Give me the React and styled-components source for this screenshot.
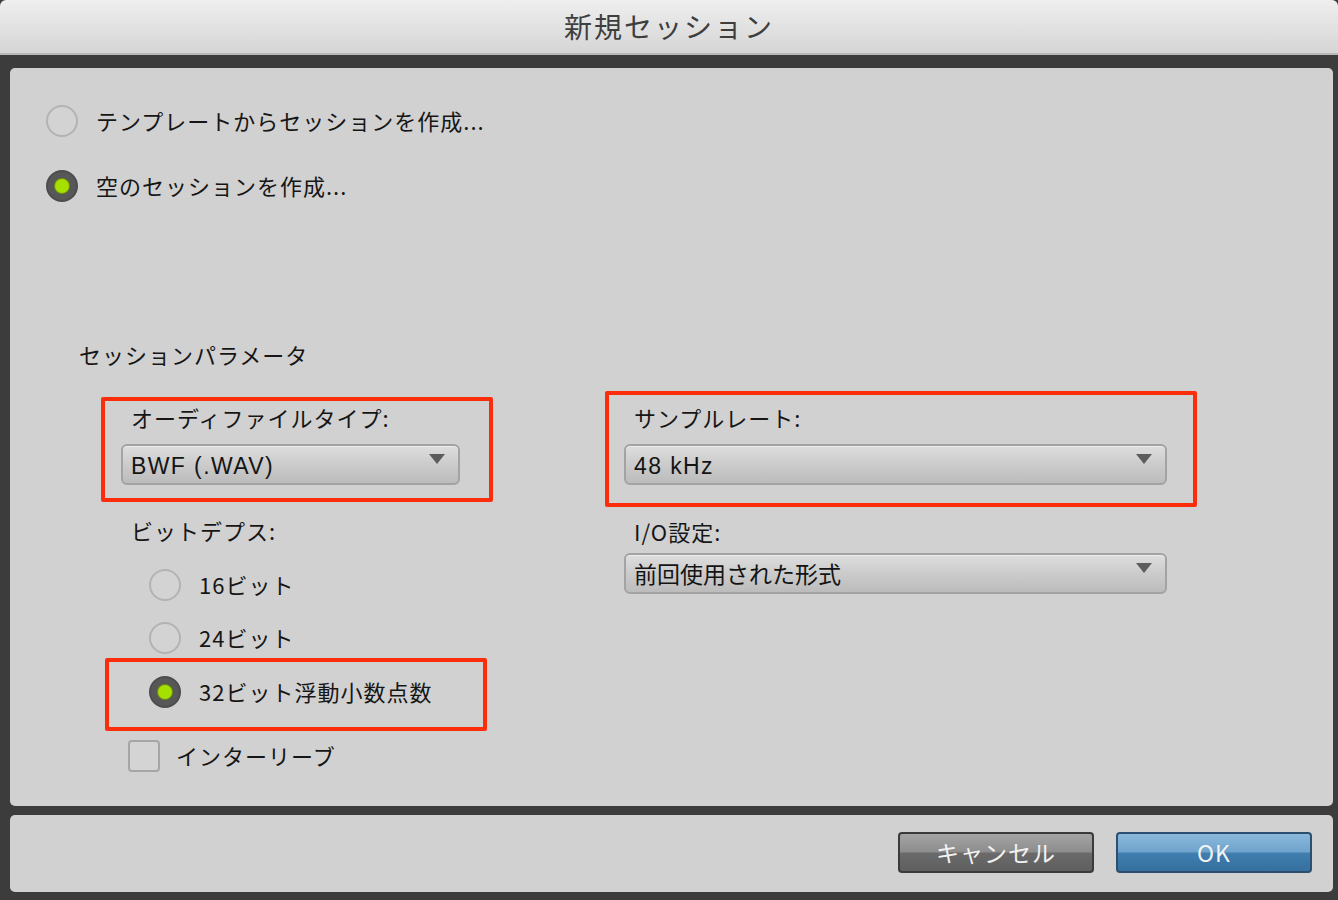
import React from "react";
import styled, { createGlobalStyle } from "styled-components";

const GlobalStyle = createGlobalStyle`
  html, body {
    margin: 0;
    padding: 0;
    background: #3c3c3c;
  }
  body {
    font-family: "Noto Sans CJK JP", "Noto Sans", sans-serif;
    color: #161616;
  }
`;

const Window = styled.div`
  width: 1338px;
  height: 900px;
  display: flex;
  flex-direction: column;
  background: #3c3c3c;
  overflow: hidden;
`;

const TitleBar = styled.div`
  height: 55px;
  flex-shrink: 0;
  display: flex;
  align-items: center;
  justify-content: center;
  background: linear-gradient(#efefef, #d5d5d5);
  border-bottom: 2px solid #b9b9b9;
  border-radius: 6px 6px 0 0;
  font-size: 28px;
  letter-spacing: 2px;
  color: #3e3e3e;
  line-height: 1;
  padding-bottom: 2px;
  box-sizing: border-box;
`;

const Content = styled.div`
  flex: 1;
  display: flex;
  flex-direction: column;
  gap: 9px;
  padding: 13px 5px 8px 10px;
`;

const Panel = styled.div`
  background: #d1d1d1;
  border-radius: 5px;
  height: ${(p) => p.$height}px;
  flex-shrink: 0;
`;

const MainPanel = styled(Panel)`
  display: flex;
  flex-direction: column;
  padding: 37px 0 0 36px;
  box-sizing: border-box;
`;

const Footer = styled(Panel)`
  display: flex;
  justify-content: flex-end;
  align-items: center;
  gap: 22px;
  padding: 0 21px 2px 0;
  box-sizing: border-box;
`;

const OptionRow = styled.div`
  display: flex;
  align-items: center;
  gap: ${(p) => p.$gap || 18}px;
  height: 32px;
  margin-top: ${(p) => p.$top || 0}px;
  margin-left: ${(p) => p.$left || 0}px;
`;

const OptionText = styled.span`
  font-size: 22px;
  letter-spacing: 1px;
  line-height: 1;
  margin-bottom: 2px;
  white-space: nowrap;
`;

const Radio = styled.span`
  width: 32px;
  height: 32px;
  box-sizing: border-box;
  border-radius: 50%;
  flex-shrink: 0;
  display: flex;
  align-items: center;
  justify-content: center;
  border: 2px solid ${(p) => (p.$checked ? "#4d4d4d" : "#b3b3b3")};
  background: ${(p) => (p.$checked ? "#575757" : "#d3d3d3")};

  &::after {
    content: "";
    display: ${(p) => (p.$checked ? "block" : "none")};
    width: 14px;
    height: 14px;
    border-radius: 50%;
    background: #a6e000;
    box-shadow: 0 0 0 1px #6f8f10;
  }
`;

const Checkbox = styled.span`
  width: 32px;
  height: 32px;
  box-sizing: border-box;
  border: 2px solid #a6a6a6;
  border-radius: 4px;
  background: #d4d4d4;
  flex-shrink: 0;
`;

const SectionTitle = styled.div`
  font-size: 22px;
  letter-spacing: 1px;
  line-height: 30px;
  margin: 137px 0 0 33px;
`;

const ParamsRow = styled.div`
  display: flex;
  align-items: flex-start;
  margin-left: 55px;
`;

const Column = styled.div`
  display: flex;
  flex-direction: column;
  align-items: flex-start;
  margin-top: ${(p) => p.$top}px;
  width: ${(p) => p.$width}px;
`;

const Highlight = styled.div`
  border: 4px solid #fb2d0a;
  border-radius: 2px;
  box-sizing: border-box;
  display: flex;
  flex-direction: column;
  align-items: flex-start;
  width: ${(p) => p.$width}px;
  height: ${(p) => p.$height}px;
  padding: ${(p) => p.$pad};
  margin-left: ${(p) => p.$left || 0}px;
  margin-top: ${(p) => p.$top || 0}px;
`;

const FieldLabel = styled.div`
  font-size: 22px;
  letter-spacing: 1px;
  line-height: 26px;
  margin-left: ${(p) => p.$left || 10}px;
  margin-top: ${(p) => p.$top || 0}px;
`;

const Select = styled.div`
  position: relative;
  width: ${(p) => p.$width}px;
  height: 41px;
  box-sizing: border-box;
  flex-shrink: 0;
  margin-top: ${(p) => p.$top || 14}px;
  margin-left: ${(p) => p.$left || 0}px;
  border: 2px solid #a3a3a3;
  border-radius: 6px;
  background: linear-gradient(#dedede 0%, #cdcdcd 45%, #bcbcbc 100%);
  box-shadow: inset 0 1px 0 #ececec;
  display: flex;
  align-items: center;
  padding: 3px 0 0 8px;
  font-family: "Liberation Sans", "Noto Sans CJK JP", sans-serif;
  font-size: 23px;
  letter-spacing: ${(p) => (p.$cjk ? 0 : 1.4)}px;
  line-height: 1;
  color: #141414;

  &::after {
    content: "";
    position: absolute;
    right: 13px;
    top: 8px;
    border-left: 8px solid transparent;
    border-right: 8px solid transparent;
    border-top: 10px solid #5c5c5c;
  }
`;

const Button = styled.div`
  width: 196px;
  height: 41px;
  box-sizing: border-box;
  border-radius: 4px;
  border: 2px solid ${(p) => (p.$primary ? "#2c4f70" : "#3b3b3b")};
  background: ${(p) =>
    p.$primary
      ? "linear-gradient(#8bb9dc 0%, #6fa3cc 48%, #3f7eaf 52%, #35709f 100%)"
      : "linear-gradient(#a4a4a4 0%, #8d8d8d 48%, #6a6a6a 52%, #5f5f5f 100%)"};
  display: flex;
  align-items: center;
  justify-content: center;
  font-size: 23px;
  letter-spacing: 1px;
  color: #f2f2f2;
  line-height: 1;
`;

const App = () => {
  return (
    <>
      <GlobalStyle />
      <Window>
        <TitleBar>新規セッション</TitleBar>
        <Content>
          <MainPanel $height={738}>
            <OptionRow>
              <Radio />
              <OptionText>テンプレートからセッションを作成...</OptionText>
            </OptionRow>
            <OptionRow $top={33}>
              <Radio $checked />
              <OptionText>空のセッションを作成...</OptionText>
            </OptionRow>

            <SectionTitle>セッションパラメータ</SectionTitle>

            <ParamsRow>
              <Column $top={28} $width={504}>
                <Highlight $width={392} $height={105} $pad="3px 0 0 16px">
                  <FieldLabel>オーディファイルタイプ:</FieldLabel>
                  <Select $width={339}>BWF (.WAV)</Select>
                </Highlight>

                <FieldLabel $left={30} $top={15}>ビットデプス:</FieldLabel>
                <OptionRow $top={26} $left={48}>
                  <Radio />
                  <OptionText>16ビット</OptionText>
                </OptionRow>
                <OptionRow $top={21} $left={48}>
                  <Radio />
                  <OptionText>24ビット</OptionText>
                </OptionRow>
                <Highlight $width={382} $height={73} $left={4} $top={4} $pad="14px 0 0 40px">
                  <OptionRow>
                    <Radio $checked />
                    <OptionText>32ビット浮動小数点数</OptionText>
                  </OptionRow>
                </Highlight>
                <OptionRow $top={9} $left={27} $gap={16}>
                  <Checkbox />
                  <OptionText>インターリーブ</OptionText>
                </OptionRow>
              </Column>

              <Column $top={22} $width={592}>
                <Highlight $width={592} $height={116} $pad="9px 0 0 15px">
                  <FieldLabel>サンプルレート:</FieldLabel>
                  <Select $width={543}>48 kHz</Select>
                </Highlight>
                <FieldLabel $left={29} $top={11}>I/O設定:</FieldLabel>
                <Select $width={543} $left={19} $top={9} $cjk>
                  前回使用された形式
                </Select>
              </Column>
            </ParamsRow>
          </MainPanel>

          <Footer $height={77}>
            <Button>キャンセル</Button>
            <Button $primary>OK</Button>
          </Footer>
        </Content>
      </Window>
    </>
  );
};

export default App;
